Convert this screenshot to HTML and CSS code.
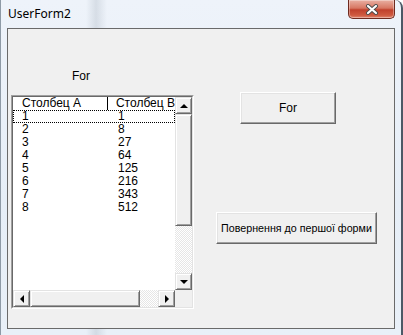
FILE: index.html
```html
<!DOCTYPE html>
<html lang="uk">
<head>
    <meta charset="UTF-8">
    <title>UserForm2</title>
    <link rel="stylesheet" href="styles.css">
</head>
<body>
    <div class="window">
        <div class="titlebar">
            <span class="title">UserForm2</span>
            <div class="close-btn">
                <svg width="14" height="11" viewBox="0 0 14 11">
                    <path d="M3 2 L11 9 M11 2 L3 9" stroke="#4a4a4a" stroke-width="4" stroke-linecap="round"/>
                    <path d="M3 2 L11 9 M11 2 L3 9" stroke="#ffffff" stroke-width="2.2" stroke-linecap="round"/>
                </svg>
            </div>
        </div>

        <div class="client">
            <div class="left-col">
                <div class="label">For</div>

                <div class="listbox">
                    <div class="lb-inner">
                        <div class="lb-content">
                            <div class="lb-header">
                                <span class="cell col-a">Столбец A</span>
                                <span class="cell col-b">Столбец B</span>
                            </div>
                            <div class="lb-row focused"><span class="cell col-a">1</span><span class="cell col-b">1</span></div>
                            <div class="lb-row"><span class="cell col-a">2</span><span class="cell col-b">8</span></div>
                            <div class="lb-row"><span class="cell col-a">3</span><span class="cell col-b">27</span></div>
                            <div class="lb-row"><span class="cell col-a">4</span><span class="cell col-b">64</span></div>
                            <div class="lb-row"><span class="cell col-a">5</span><span class="cell col-b">125</span></div>
                            <div class="lb-row"><span class="cell col-a">6</span><span class="cell col-b">216</span></div>
                            <div class="lb-row"><span class="cell col-a">7</span><span class="cell col-b">343</span></div>
                            <div class="lb-row"><span class="cell col-a">8</span><span class="cell col-b">512</span></div>
                        </div>

                        <div class="vscroll">
                            <div class="sb-btn"><span class="arrow up"></span></div>
                            <div class="sb-thumb v"></div>
                            <div class="sb-track"></div>
                            <div class="sb-btn"><span class="arrow down"></span></div>
                        </div>

                        <div class="hscroll">
                            <div class="sb-btn"><span class="arrow left"></span></div>
                            <div class="sb-thumb h"></div>
                            <div class="sb-track"></div>
                            <div class="sb-btn"><span class="arrow right"></span></div>
                        </div>

                        <div class="corner"></div>
                    </div>
                </div>
            </div>

            <div class="right-col">
                <button class="btn btn-for">For</button>
                <button class="btn btn-back">Повернення до першої форми</button>
            </div>
        </div>
    </div>
</body>
</html>
```

FILE: styles.css
```css
* {
    margin: 0;
    padding: 0;
    box-sizing: border-box;
}

body {
    width: 403px;
    height: 335px;
    overflow: hidden;
    background: #ffffff;
    font-family: 'Liberation Sans', Arial, sans-serif;
}

.window {
    width: 403px;
    height: 335px;
    border-right: 2px solid #4c5966;
    border-left: 1px solid #8e9aa6;
    border-radius: 0 8px 0 0;
    background:
        linear-gradient(90deg, rgba(120, 135, 150, 0) 85px, rgba(120, 135, 150, 0.2) 95px, rgba(120, 135, 150, 0) 106px),
        linear-gradient(180deg, #eef3fa 0%, #e6eef7 60%, #e9f0f8 100%);
    display: flex;
    flex-direction: column;
}

.titlebar {
    height: 28px;
    display: flex;
    justify-content: space-between;
    align-items: flex-start;
}

.title {
    font-family: 'Noto Sans', sans-serif;
    font-size: 12px;
    color: #000;
    padding: 5px 0 0 7px;
}

.close-btn {
    width: 47px;
    height: 19px;
    margin-right: 6px;
    border: 1px solid #6e2a1f;
    border-top: none;
    border-radius: 0 0 5px 5px;
    background: linear-gradient(180deg, #e9b0a3 0%, #d77763 45%, #c0402c 55%, #cf5a40 85%, #e08770 100%);
    display: flex;
    justify-content: center;
    align-items: center;
    box-shadow: inset 0 0 0 1px rgba(255, 255, 255, 0.35);
}

.client {
    height: 301px;
    margin-left: 6px;
    width: 388px;
    border: 1px solid #6a6a6a;
    background: #f0f0f0;
    display: flex;
}

.left-col {
    padding-left: 3px;
    display: flex;
    flex-direction: column;
}

.label {
    font-size: 12px;
    line-height: 14px;
    color: #000;
    margin-top: 40px;
    padding-left: 61px;
    height: 26px;
}

.listbox {
    width: 183px;
    height: 214px;
    border: 1px solid;
    border-color: #a0a0a0 #ffffff #ffffff #a0a0a0;
}

.lb-inner {
    width: 100%;
    height: 100%;
    border: 1px solid;
    border-color: #696969 #e3e3e3 #e3e3e3 #696969;
    background: #fff;
    display: grid;
    grid-template-columns: 1fr 17px;
    grid-template-rows: 1fr 17px;
}

.lb-content {
    overflow: hidden;
    font-size: 12px;
    color: #000;
}

.lb-header {
    display: flex;
    height: 13px;
    line-height: 13px;
}

.lb-header .col-a {
    border-right: 1px solid #000;
}

.lb-row {
    display: flex;
    height: 13px;
    line-height: 13px;
}

.lb-row.focused {
    outline: 1px dotted #000;
    outline-offset: -1px;
}

.cell {
    padding-left: 9px;
    white-space: nowrap;
}

.col-a {
    width: 97px;
}

.col-b {
    flex: 1;
    padding-left: 8px;
}

.vscroll {
    display: flex;
    flex-direction: column;
}

.hscroll {
    display: flex;
}

.sb-btn {
    width: 17px;
    height: 17px;
    flex-shrink: 0;
    background: #f0f0f0;
    border: 1px solid;
    border-color: #e3e3e3 #696969 #696969 #e3e3e3;
    box-shadow: inset 1px 1px 0 #fff, inset -1px -1px 0 #a0a0a0;
    display: flex;
    justify-content: center;
    align-items: center;
}

.sb-thumb {
    flex-shrink: 0;
    background: #f0f0f0;
    border: 1px solid;
    border-color: #e3e3e3 #696969 #696969 #e3e3e3;
    box-shadow: inset 1px 1px 0 #fff, inset -1px -1px 0 #a0a0a0;
}

.sb-thumb.v {
    height: 112px;
}

.sb-thumb.h {
    width: 110px;
}

.sb-track {
    flex: 1;
    background: repeating-conic-gradient(#ffffff 0% 25%, #e6e6e6 0% 50%);
    background-size: 2px 2px;
}

.corner {
    background: #f0f0f0;
}

.arrow {
    width: 0;
    height: 0;
    border-style: solid;
}

.arrow.up {
    border-width: 0 4px 4px 4px;
    border-color: transparent transparent #000 transparent;
}

.arrow.down {
    border-width: 4px 4px 0 4px;
    border-color: #000 transparent transparent transparent;
}

.arrow.left {
    border-width: 4px 4px 4px 0;
    border-color: transparent #000 transparent transparent;
}

.arrow.right {
    border-width: 4px 0 4px 4px;
    border-color: transparent transparent transparent #000;
}

.right-col {
    display: flex;
    flex-direction: column;
    align-items: flex-start;
}

.btn {
    height: 32px;
    padding: 0;
    white-space: nowrap;
    font-family: 'Liberation Sans', Arial, sans-serif;
    font-size: 12px;
    color: #000;
    background: #f0f0f0;
    border: 1px solid;
    border-color: #ffffff #696969 #696969 #ffffff;
    box-shadow: inset -1px -1px 0 #a0a0a0, inset 1px 1px 0 #e3e3e3;
}

.btn-for {
    width: 96px;
    margin-top: 63px;
    margin-left: 46px;
}

.btn-back {
    width: 161px;
    margin-top: 88px;
    margin-left: 22px;
    font-size: 10.7px;
}
```
